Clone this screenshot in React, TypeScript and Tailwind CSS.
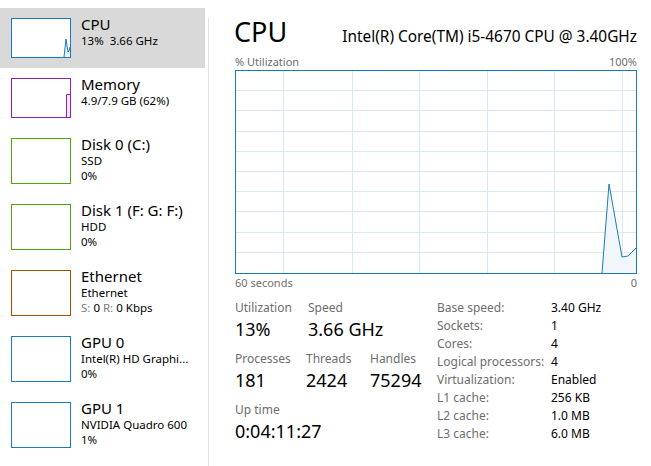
const font = { fontFamily: '"Noto Sans", "Open Sans", sans-serif' };

type Dev = {
  name: string;
  lines: React.ReactNode[];
  color: string;
  tall: boolean;
  selected?: boolean;
  spark?: React.ReactNode;
};

const devices: Dev[] = [
  {
    name: "CPU",
    lines: ["13%  3.66 GHz"],
    color: "#1a79bd",
    tall: false,
    selected: true,
    spark: (
      <svg width="58" height="38" className="absolute left-0 top-0">
        <polygon points="52,38 54,20 56,33 57,32 58,28 58,38" fill="#e6f0f7" />
        <polyline points="52,38 54,20 56,33 57,32 58,28" fill="none" stroke="#1a79bd" strokeWidth="1" />
      </svg>
    ),
  },
  {
    name: "Memory",
    lines: ["4.9/7.9 GB (62%)"],
    color: "#8e1fb0",
    tall: false,
    spark: (
      <svg width="58" height="38" className="absolute left-0 top-0">
        <rect x="54" y="15" width="4" height="23" fill="#f1e4f5" />
        <polyline points="54.5,38 54.5,15.5 58,15.5" fill="none" stroke="#8e1fb0" strokeWidth="1" />
      </svg>
    ),
  },
  { name: "Disk 0 (C:)", lines: ["SSD", "0%"], color: "#4da60c", tall: true },
  { name: "Disk 1 (F: G: F:)", lines: ["HDD", "0%"], color: "#4da60c", tall: true },
  {
    name: "Ethernet",
    lines: [
      "Ethernet",
      <span key="e">
        <span className="text-[#7a7a7a]">S:</span> 0 <span className="text-[#7a7a7a]">R:</span> 0 Kbps
      </span>,
    ],
    color: "#a74f01",
    tall: true,
  },
  { name: "GPU 0", lines: ["Intel(R) HD Graphi...", "0%"], color: "#1a79bd", tall: true },
  { name: "GPU 1", lines: ["NVIDIA Quadro 600", "1%"], color: "#1a79bd", tall: true },
];

const specs: [string, string][] = [
  ["Base speed:", "3.40 GHz"],
  ["Sockets:", "1"],
  ["Cores:", "4"],
  ["Logical processors:", "4"],
  ["Virtualization:", "Enabled"],
  ["L1 cache:", "256 KB"],
  ["L2 cache:", "1.0 MB"],
  ["L3 cache:", "6.0 MB"],
];

function DeviceRow({ d }: { d: Dev }) {
  return (
    <div
      className={`flex pl-[11px] pt-[10px] ${d.tall ? "h-[66px]" : "h-[60px]"} ${
        d.selected ? "bg-[#d9d9d9]" : ""
      }`}
    >
      <div
        className={`relative w-[60px] shrink-0 border bg-white ${d.tall ? "h-[46px]" : "h-[40px]"}`}
        style={{ borderColor: d.color }}
      >
        {d.spark}
      </div>
      <div className="ml-[10px] -mt-[3px] text-black">
        <div className="text-[15px] leading-[18px]">{d.name}</div>
        {d.lines.map((l, i) => (
          <div key={i} className="whitespace-pre text-[11.5px] leading-[15px]">
            {l}
          </div>
        ))}
      </div>
    </div>
  );
}

function Chart() {
  const vx = [48, 117, 184, 252, 319, 387];
  const hy = [1, 2, 3, 4, 5, 6, 7, 8, 9].map((k) => k * 20.2);
  return (
    <svg width="402" height="204" className="block">
      {vx.map((x) => (
        <line key={x} x1={x + 0.5} y1="0" x2={x + 0.5} y2="204" stroke="#d9e9f4" strokeWidth="1" />
      ))}
      {hy.map((y) => (
        <line key={y} x1="0" y1={Math.round(y) + 0.5} x2="402" y2={Math.round(y) + 0.5} stroke="#d9e9f4" strokeWidth="1" />
      ))}
      <polygon points="367,203 374,114 387,187 393,186 401,178 401,203" fill="#f1f6fa" />
      <polyline points="367,203 374,114 387,187 393,186 401,178" fill="none" stroke="#1a79bd" strokeWidth="1" />
      <rect x="0.5" y="0.5" width="401" height="203" fill="none" stroke="#1a79bd" strokeWidth="1" />
    </svg>
  );
}

function Stat({ label, value, w }: { label: string; value: string; w?: string }) {
  return (
    <div className={w}>
      <div className="text-[12px] leading-[16px] text-[#6e6e6e]">{label}</div>
      <div className="mt-[1px] text-[18px] leading-[24px] text-black">{value}</div>
    </div>
  );
}

export default function App() {
  return (
    <div className="flex h-[466px] w-[651px] overflow-hidden bg-white" style={font}>
      <div className="w-[205px] shrink-0 pt-[8px]">
        {devices.map((d) => (
          <DeviceRow key={d.name} d={d} />
        ))}
      </div>
      <div className="ml-[3px] mt-[18px] w-px bg-[#e3e3e3]" />
      <div className="ml-[26px] w-[402px]">
        <div className="mt-[15px] flex items-baseline justify-between">
          <div className="-ml-[1px] text-[27px] leading-[34px] text-black">CPU</div>
          <div className="text-[15.4px] text-black">Intel(R) Core(TM) i5-4670 CPU @ 3.40GHz</div>
        </div>
        <div className="mb-[1px] mt-[5px] flex justify-between text-[11px] leading-[15px] text-[#6e6e6e]">
          <span>% Utilization</span>
          <span>100%</span>
        </div>
        <Chart />
        <div className="mt-[1px] flex justify-between text-[11px] leading-[15px] text-[#6e6e6e]">
          <span>60 seconds</span>
          <span>0</span>
        </div>
        <div className="mt-[10px] flex">
          <div className="w-[202px]">
            <div className="flex">
              <Stat label="Utilization" value="13%" w="w-[73px]" />
              <Stat label="Speed" value="3.66 GHz" />
            </div>
            <div className="mt-[10px] flex">
              <Stat label="Processes" value="181" w="w-[71px]" />
              <Stat label="Threads" value="2424" w="w-[64px]" />
              <Stat label="Handles" value="75294" />
            </div>
            <div className="mt-[10px]">
              <Stat label="Up time" value="0:04:11:27" />
            </div>
          </div>
          <div className="-mt-[1px] grid grid-cols-[114px_1fr] text-[12px] leading-[18px]">
            {specs.map(([k, v]) => (
              <div key={k} className="contents">
                <span className="text-[#6e6e6e]">{k}</span>
                <span className="text-black">{v}</span>
              </div>
            ))}
          </div>
        </div>
      </div>
    </div>
  );
}
